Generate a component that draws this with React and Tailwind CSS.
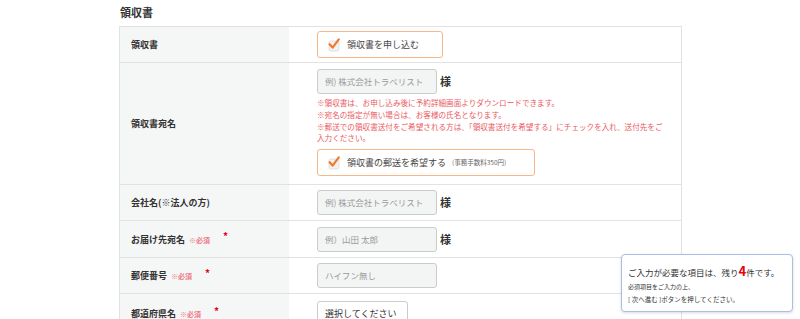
import React from 'react';

const FONT = { fontFamily: '"Noto Sans CJK JP", "Noto Sans", sans-serif' };

const Check = () => (
  <svg width="14" height="14" viewBox="0 0 14 14" className="shrink-0">
    <rect x="2" y="3" width="10" height="10" rx="1.5" fill="#f1f1f1" stroke="#dcdcdc" strokeWidth="0.8" />
    <path d="M2.6 6.2 L5.6 9.6 L11.8 1.4" fill="none" stroke="#f07a2a" strokeWidth="2.2" strokeLinecap="round" strokeLinejoin="round" />
  </svg>
);

const CheckBox = ({ children, width }) => (
  <div className={`flex items-center h-[27px] border border-[#f8b787] rounded-[3px] bg-white pl-[9px] gap-[6px] ${width}`}>
    <Check />
    <span className="text-[9px] text-[#444] leading-none">{children}</span>
  </div>
);

const Input = ({ placeholder, sama, width = 'w-[120px]', white }) => (
  <div className="flex items-center gap-[3px]">
    <div className={`h-[25px] ${width} border border-[#c9cccc] rounded-[3px] ${white ? 'bg-white' : 'bg-[#f3f4f4]'} flex items-center px-[7px] overflow-hidden`}>
      <span className={`text-[8.5px] leading-none whitespace-nowrap ${white ? 'text-[#333] text-[9px]' : 'text-[#9a9a9a]'}`}>{placeholder}</span>
    </div>
    {sama && <span className="text-[11px] font-bold text-[#333] leading-none">様</span>}
  </div>
);

const Label = ({ children, required }) => (
  <div className="bg-[#f5f6f6] flex items-center pl-[11px]">
    <span className="text-[9px] font-bold text-[#333] leading-none">{children}</span>
    {required && (
      <>
        <span className="ml-[4px] text-[7px] font-bold text-[#ee7a86] leading-none mt-[2px]">※必須</span>
        <span className="ml-[13px] text-[10px] font-bold text-[#e60012] leading-none -mt-[6px]">*</span>
      </>
    )}
  </div>
);

const Row = ({ label, required, children, h = 'h-[36px]', pad = '' }) => (
  <div className={`grid grid-cols-[169px_1fr] border-b border-[#e2e2e2] ${h}`}>
    <Label required={required}>{label}</Label>
    <div className={`pl-[28px] flex flex-col justify-center ${pad}`}>{children}</div>
  </div>
);

export default function App() {
  return (
    <div className="relative w-[800px] h-[319px] overflow-hidden bg-white" style={FONT}>
      <div className="ml-[119px] w-[563px]">
        <h2 className="h-[26px] pt-[5px] pl-[1px] text-[11px] font-bold text-[#333] leading-[14px]">領収書</h2>
        <div className="border-t border-x border-[#e2e2e2]">
          <Row label="領収書">
            <CheckBox width="w-[126px]">領収書を申し込む</CheckBox>
          </Row>
          <Row label="領収書宛名" h="h-[122px]" pad="justify-start pt-[6px]">
            <Input placeholder="例) 株式会社トラベリスト" sama />
            <div className="mt-[3px] text-[7.6px] leading-[11.8px] text-[#ea5a62] pr-[16px]">
              <p>※領収書は、お申し込み後に予約詳細画面よりダウンロードできます。</p>
              <p>※宛名の指定が無い場合は、お客様の氏名となります。</p>
              <p>※郵送での領収書送付をご希望される方は、「領収書送付を希望する」にチェックを入れ、送付先をご入力ください。</p>
            </div>
            <div className="mt-[5px]">
              <div className="flex items-center h-[27px] w-[218px] border border-[#f8b787] rounded-[3px] bg-white pl-[9px] gap-[6px]">
                <Check />
                <span className="text-[9px] text-[#444] leading-none">領収書の郵送を希望する</span>
                <span className="text-[6.5px] text-[#666] leading-none">(事務手数料350円)</span>
              </div>
            </div>
          </Row>
          <Row label="会社名(※法人の方)">
            <Input placeholder="例) 株式会社トラベリスト" sama />
          </Row>
          <Row label="お届け先宛名" required h="h-[37px]">
            <Input placeholder="例）山田 太郎" sama />
          </Row>
          <Row label="郵便番号" required>
            <Input placeholder="ハイフン無し" />
          </Row>
          <Row label="都道府県名" required h="h-[40px]" pad="justify-start pt-[7px]">
            <Input placeholder="選択してください" width="w-[91px]" white />
          </Row>
        </div>
      </div>

      <div className="absolute left-[621px] top-[254px] w-[172px] h-[58px] bg-white border border-[#a9c0e6] rounded-[4px] shadow-[0_1px_3px_rgba(0,0,0,0.15)] pl-[6px] pt-[9px]">
        <p className="text-[8.5px] text-[#333] leading-[14px] whitespace-nowrap">
          ご入力が必要な項目は、残り<span className="text-[13px] font-bold text-[#e60012]">4</span>件です。
        </p>
        <p className="mt-[1px] text-[6px] text-[#333] leading-[13px] whitespace-nowrap">必須項目をご入力の上、</p>
        <p className="text-[6.5px] text-[#333] leading-[12px] whitespace-nowrap">[ 次へ進む ]ボタンを押してください。</p>
      </div>
    </div>
  );
}
